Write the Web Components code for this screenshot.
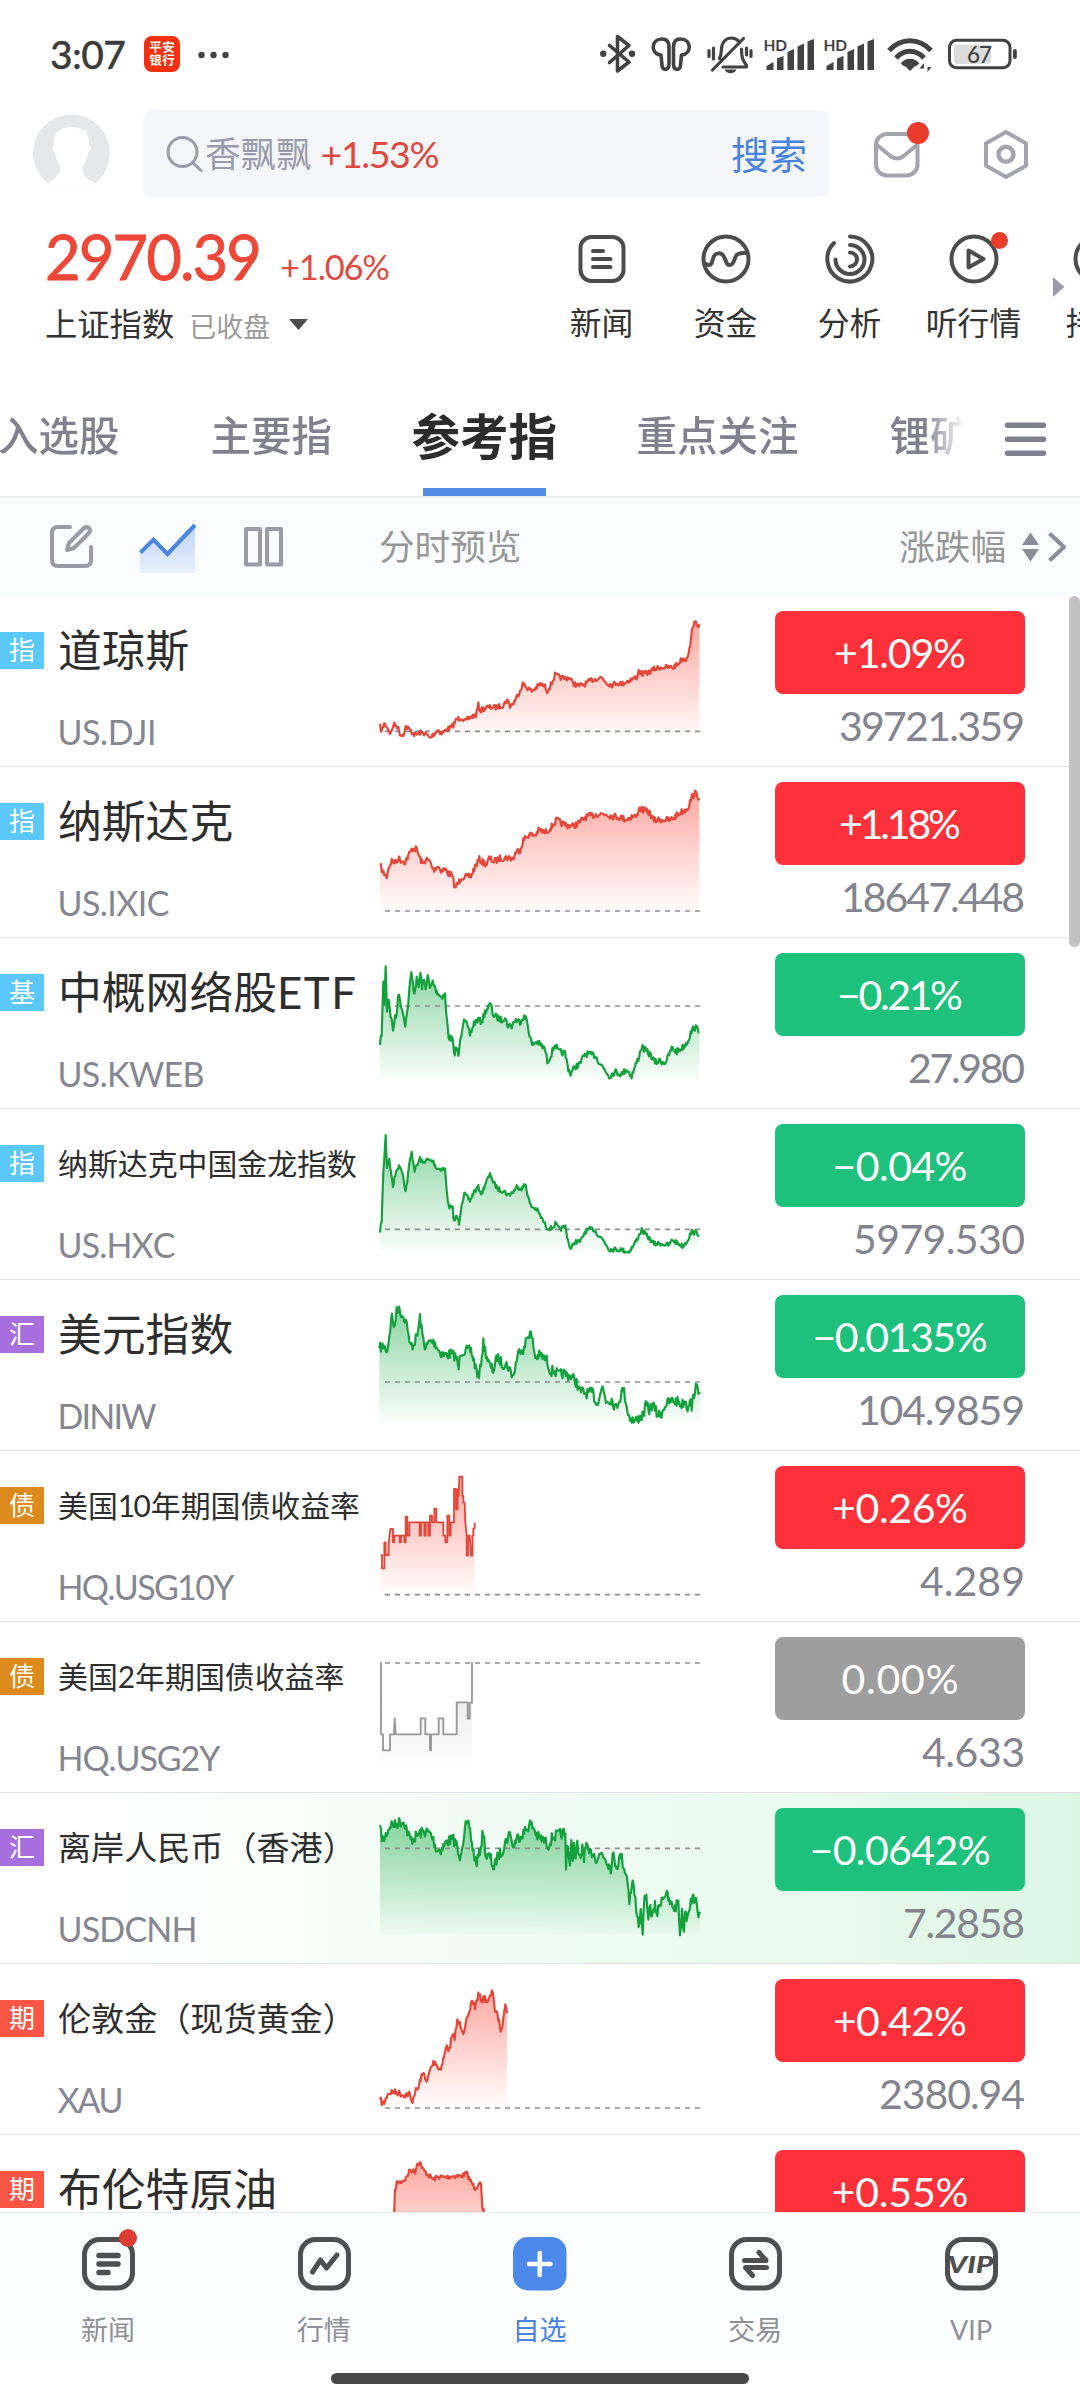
<!DOCTYPE html>
<html lang="zh-CN">
<head>
<meta charset="utf-8">
<title>自选</title>
<style>
html,body{margin:0;padding:0;background:#fff}
body{width:1080px;height:2400px;overflow:hidden;font-family:Lato,"Noto Sans CJK SC",sans-serif;color:#2e2e2e}
</style>
</head>
<body>
<stock-app></stock-app>
<script>
const svg = (x, y, w, h, body, extra = '') =>
  `<svg width="${w}" height="${h}" viewBox="${x} ${y} ${w} ${h}" fill="none" stroke-linecap="round" stroke-linejoin="round" ${extra}>${body}</svg>`;

class Base extends HTMLElement {
  connectedCallback() {
    if (this.shadowRoot) return;
    this.attachShadow({ mode: 'open' }).innerHTML =
      `<style>:host{display:block;box-sizing:border-box}*{box-sizing:border-box}svg{display:block;flex:none}</style>` + this.render();
    this.ready && this.ready();
  }
}

/* Spreads its text over a given advance width by letter spacing. */
customElements.define('fit-text', class extends Base {
  render() { return `<style>:host{display:inline-block;white-space:nowrap;font-kerning:none}span{display:inline-block;white-space:nowrap}</style><span><slot></slot></span>`; }
  ready() {
    const w = +this.getAttribute('w');
    if (!w) return;
    const s = this.shadowRoot.querySelector('span');
    const n = this.textContent.length;
    const ls = (w - s.getBoundingClientRect().width) / (n - 1);
    s.style.letterSpacing = ls + 'px';
    s.style.marginRight = -ls + 'px';
  }
});

customElements.define('status-bar', class extends Base {
  render() {
    const D = '#424242';
    const signal = o => svg(763 + o, 32, 53, 44,
      `<text x="${763.5 + o}" y="50.5" font-size="15.5" font-weight="700" fill="${D}" textLength="23.5" font-family="Lato">HD</text>
       <g fill="${D}"><path d="M${766.5 + o} 70v-4l7-4v8zM${777 + o} 70v-11.500l6.500-2.500v14zM${787.500 + o} 70v-18l6.500-3v21zM${797.500 + o} 70v-23.500l6.500-3v26.500zM${807.500 + o} 70v-28.500l6.500-2.500v31z"/></g>`);
    return `<style>
:host{height:100px;padding:32px 62px 0 50px;display:flex;align-items:flex-start}
.t{font-size:39px;line-height:44px;color:#3c3c3c;font-weight:500;-webkit-text-stroke:.3px #3c3c3c}
.app{width:36px;height:36px;border-radius:8px;background:#f2310f;margin:4px 0 0 18px;color:#fff;font:700 12.500px/13px "Noto Sans CJK SC",sans-serif;text-align:center;padding-top:4px}
.app div{height:13px;letter-spacing:.5px;padding-left:.5px}
.dots{margin:19px auto 0 18px}
</style>
<div class="t"><fit-text w="76">3:07</fit-text></div>
<div class="app"><div>平安</div><div>银行</div></div>
<div class="dots">${svg(199, 50, 31, 8, `<g fill="${D}"><circle cx="202.500" cy="54" r="3.200"/><circle cx="214.500" cy="54" r="3.200"/><circle cx="226.500" cy="54" r="3.200"/></g>`)}</div>
${svg(600, 32, 36, 44, `<g stroke="${D}" stroke-width="3.600"><path d="M609.500 45.500L629 62l-11.500 9V36.500L629 45.500 609.500 62.500"/></g><circle cx="603.300" cy="53.800" r="3.200" fill="${D}"/><circle cx="632" cy="53.800" r="3.200" fill="${D}"/>`, 'style="margin-right:14px"')}
${svg(650, 32, 43, 44, `<g stroke="${D}" stroke-width="3.600"><path d="M661 55c-11-1-10-16 1-16 6 0 7 4 7 8v17c0 7-7 7-7 1zM681.500 55c11-1 10-16-1-16-6 0-7 4-7 8v17c0 7 7 7 7 1z"/></g>`, 'style="margin-right:14px"')}
${svg(707, 32, 46, 44, `<g stroke="${D}" stroke-width="3.200"><path d="M743.500 38.500L712.500 70M719.500 58.500c2-4 1.500-6 2-10 .8-7 5-10.500 10-10.500 3 0 5 1 7 3M741.500 49c0 8 1 11 5 16.500v1.500H723M709 50.500v6M713.500 48v11M751 50.500v6M746.500 48v7"/></g><path d="M724.500 69.500h12c-2 5-10 5-12 0z" fill="${D}"/>`, 'style="margin-right:10px"')}
${signal(0)}<div style="width:7px"></div>${signal(60)}
${svg(886, 32, 48, 44, `<g stroke="${D}" stroke-width="5" stroke-linecap="butt"><path d="M889 50.500c12-13 30-13 42 0M896 58c8-9 20-9 28 0"/><path d="M902.500 65c4-5 11-5 15 0"/></g><path d="M904.500 65.500q5.500-4 11 0l-5.500 5.500zM924 72v-9l-4.500 5.500H924zM927.500 63v9l4-5h-4z" fill="${D}"/>`, 'style="margin-left:10px;margin-right:13px"')}
${svg(947, 32, 71, 44, `<rect x="954" y="44.500" width="37" height="19.500" rx="4" fill="#dcdcdc"/><rect x="949.500" y="40.300" width="60.500" height="27.400" rx="7" stroke="${D}" stroke-width="3"/><rect x="1013" y="49" width="3.800" height="10" rx="1.900" fill="${D}"/><text x="967" y="62.700" font-size="22.500" fill="${D}" font-weight="500" textLength="25" font-family="Lato">67</text>`)}`;
  }
});

customElements.define('search-header', class extends Base {
  render() {
    return `<style>
:host{height:105px;padding:10px 0 0 33px;display:flex;align-items:flex-start}
.av{margin:4px 33px 0 0}
.box{width:686px;height:87px;border-radius:8px;background:#f5f6fa;display:flex;align-items:center;padding:0 22px 0 23px;font-size:36px;line-height:50px;color:#9a9bab}
.q{margin-left:2px;font-size:35.500px}.p{color:#e0473f;font-size:37.500px;margin-left:9px}.go{color:#4983e2;font-size:38px;margin-left:auto}
.m{margin:12px 0 0 42.500px}.h{margin:17px 0 0 51.500px}
</style>
<div class="av">${svg(33, 114, 77, 80, `<defs><clipPath id="c"><circle cx="71.500" cy="153" r="38.500"/></clipPath></defs><g clip-path="url(#c)"><path d="M33 114h77v80H33z" fill="#e6e7e8"/><path d="M45.500 195l3.500-13q10-5 12-14c-3-4-5-8-6-15-3-3-3-6-1-8-1-12 6-18 17-18 5 0 9 1 11 3h5l-1 3c3 3 3 7 3 12 2 2 2 5-1 8-1 7-3 11-6 15 2 8 4 11 12 14l6 18z" fill="#fff"/></g>`)}</div>
<div class="box">${svg(166, 134, 37, 38, `<circle cx="182.500" cy="151" r="14.500" stroke="#9a9bab" stroke-width="3"/><path d="M193 162l8 7.500" stroke="#9a9bab" stroke-width="3"/>`)}
<span class="q">香飘飘</span><span class="p"><fit-text w="119">+1.53%</fit-text></span><span class="go">搜索</span></div>
<div class="m">${svg(872, 122, 60, 60, `<g stroke="#a3a4ac" stroke-width="4"><rect x="876" y="134" width="41.500" height="41.500" rx="11"/><path d="M877 145l14 11.500q6 4 12 0L917 145"/></g><circle cx="918" cy="133" r="11" fill="#ea3c2a"/>`)}</div>
<div class="h">${svg(983, 127, 46, 54, `<g stroke="#a3a4ac" stroke-width="4"><path d="M1006 132l20 11.300v22.400l-20 11.300-20-11.300v-22.400z" stroke-linejoin="miter"/><circle cx="1006" cy="154.300" r="7.500" stroke-width="4.500"/></g>`)}</div>`;
  }
});

customElements.define('quick-link', class extends Base {
  render() {
    const S = `stroke="#4c4c4c" stroke-width="4"`;
    const circle = `<circle cx="27" cy="31" r="22.500" ${S}/>`;
    const icons = {
      news: `<rect x="5.500" y="9" width="43" height="44" rx="11" ${S}/><path d="M18 23h10M18 31h17.500M18 39h17.500" ${S}/>`,
      fund: circle + `<path d="M5 35c7 5 8 0 9-4 1.500-7 9-8 12 0 2 5 2 6 5 6 4 0 4-6 6-9 2-4 7-3 11-3" ${S}/>`,
      ana: `<path d="M27 8.500a22.500 22.500 0 1 1-16 6.500M27 17a14.500 14.500 0 1 1-14.500 14.500M27 24.500a7 7 0 1 1 0 14" ${S}/>`,
      play: circle + `<path d="M21.500 22.500v17L36.500 31z" ${S}/>`,
      hold: circle
    };
    return `<style>:host{width:124px;flex:none;display:flex;flex-direction:column;align-items:center}
.ic{position:relative;margin-left:1px}
.l{font-size:31.800px;line-height:44px;margin-top:15px;color:#333;white-space:nowrap}
i{position:absolute;left:43.500px;top:4px;width:17px;height:17px;border-radius:50%;background:#ea3c2a}</style>
<div class="ic">${svg(0, 0, 54, 58, icons[this.getAttribute('icon')])}${this.hasAttribute('dot') ? '<i></i>' : ''}</div><div class="l"><slot></slot></div>`;
  }
});

customElements.define('index-header', class extends Base {
  render() {
    return `<style>
:host{height:175px;display:flex;padding-left:45px;padding-top:20px;overflow:hidden;position:relative}
.idx{width:494px;flex:none}
.a{display:flex;align-items:baseline;height:62px;line-height:62px;color:#ee4637}
.big{font-size:61.500px;margin-right:18px;-webkit-text-stroke:.8px #ee4637}.s{font-size:34.500px;color:#e24a3f}
.b{display:flex;align-items:center;height:44px;margin-top:15px;font-size:32.300px;line-height:44px;color:#333}
.c{font-size:27px;color:#9a9a9a;margin:5px 18px 0 15px}
.more{position:absolute;left:1052px;top:70px}
.ql{display:flex;margin-top:3px;margin-left:.5px}
</style>
<div class="idx"><div class="a"><span class="big"><fit-text w="217">2970.39</fit-text></span><span class="s"><fit-text w="110">+1.06%</fit-text></span></div>
<div class="b"><span>上证指数</span><span class="c">已收盘</span>${svg(288, 318, 21, 13, '<path d="M289 319h19l-9.500 11z" fill="#4c4c4c"/>')}</div></div>
<div class="ql"><quick-link icon="news">新闻</quick-link><quick-link icon="fund">资金</quick-link><quick-link icon="ana">分析</quick-link><quick-link icon="play" dot>听行情</quick-link><quick-link icon="hold">持仓</quick-link></div>
<div class="more">${svg(1052, 275, 14, 24, '<path d="M1053 277v20l11.500-10z" fill="#9c9ca8"/>')}</div>`;
  }
});

customElements.define('group-tabs', class extends Base {
  render() {
    return `<style>
:host{height:117px;display:flex;align-items:stretch;border-bottom:1px solid #e4e6ea;position:relative;overflow:hidden;white-space:nowrap;color:#80818d;font-size:40.500px;font-weight:500;line-height:60px}
.w{width:965px;display:flex;overflow:hidden;padding-top:26px;flex:none;-webkit-mask-image:linear-gradient(90deg,#000 925px,transparent 965px);mask-image:linear-gradient(90deg,#000 925px,transparent 965px)}
span{flex:none}
.on{color:#2c2c2c;font-size:48.500px;font-weight:700;display:flex;flex-direction:column;align-items:center;justify-content:space-between;height:90px}
.on:after{content:"";width:123px;height:8px;background:#548ce4}
.menu{margin:41px 0 0 39px}
</style>
<div class="w"><span style="width:212.500px;margin-left:-2px">入选股</span><span style="width:201px">主要指</span><span class="on">参考指</span><span style="margin-left:79.500px;width:253px">重点关注</span><span>锂矿</span></div>
<div class="menu">${svg(1004, 421, 43, 37, '<g stroke="#80818d" stroke-width="5.500"><path d="M1007.500 425.300h36M1007.500 439.300h36M1007.500 453.300h36"/></g>')}</div>`;
  }
});

customElements.define('list-toolbar', class extends Base {
  render() {
    const G = 'stroke="#9a9ba6" stroke-width="4"';
    return `<style>
:host{height:99px;display:flex;align-items:center;background:#fafcff;padding:0 13px 0 48px;font-size:35.600px;line-height:50px;color:#979797}
.t{margin-left:94px}.r{margin-left:auto;display:flex;align-items:center;color:#979797}
</style>
${svg(48, 520, 47, 54, `<path d="M70 527H58q-6 0-6 6v27q0 6 6 6h27q6 0 6-6V547" ${G}/><path d="M67 550l2-7 15-15q3-2 5 0t0 5L74 548z" ${G}/>`)}
${svg(139, 520, 58, 54, `<defs><linearGradient id="g" x1="0" y1="0" x2="0" y2="1"><stop offset="0" stop-color="#bcd2f6"/><stop offset="1" stop-color="#e9f1fd"/></linearGradient></defs><path d="M140 552l13-12 14 14 28-29v48h-55z" fill="url(#g)"/><path d="M140.500 552.500l13-13 14 14.500 27.500-29" stroke="#4a86e2" stroke-width="4" stroke-linecap="butt" stroke-linejoin="miter"/>`, 'style="margin-left:44px"')}
${svg(242, 520, 43, 54, `<rect x="246" y="529" width="14" height="35.500" ${G}/><rect x="267" y="529" width="14" height="35.500" ${G}/>`, 'style="margin-left:45px"')}
<span class="t">分时预览</span>
<span class="r">涨跌幅${svg(1021, 528, 19, 36, '<path d="M1022 544l8.500-12.500L1039 544zM1022 548l8.500 12.500L1039 548z" fill="#8b8c98"/>', 'style="margin-left:15px"')}${svg(1046, 528, 21, 36, '<path d="M1049.500 532.500l14.500 13.500-14.500 13.500" stroke="#8b8c98" stroke-width="4" stroke-linecap="butt"/>', 'style="margin-left:6px"')}</span>`;
  }
});

/* Intraday line. Anchors are in thirds of a pixel; jitter adds tick noise between them. */
const SERIES = {
  dji: { c: 'up', top: 18, base: 424, j: 12, p: '28,405 35,425 42,400 50,408 62,432 70,405 80,405 92,435 100,432 108,410 120,420 135,435 150,428 165,430 180,445 195,428 205,420 215,430 230,418 240,415 250,405 260,388 275,382 285,395 300,382 318,375 325,345 330,362 350,352 380,352 400,345 412,330 420,348 430,340 445,312 458,282 470,292 485,303 500,292 512,282 525,290 532,303 545,280 555,255 570,262 585,265 598,262 608,278 625,288 645,282 665,270 695,262 710,278 725,285 740,278 755,282 775,272 800,262 806,242 815,252 835,248 850,238 870,232 910,232 925,220 937,206 948,208 958,180 963,150 968,105 978,99 988,106' },
  ixic: { c: 'up', top: 531, base: 963, j: 15, p: '30,825 38,845 50,860 55,835 65,812 75,818 85,805 95,812 105,815 115,798 127,775 140,778 148,800 158,822 168,808 180,815 190,840 203,828 215,842 225,838 235,850 245,855 255,892 265,880 275,860 290,862 303,858 315,830 328,808 340,818 350,822 358,805 372,815 390,805 415,803 430,806 438,785 450,780 460,750 475,735 495,735 508,720 525,728 545,710 560,690 575,700 590,705 608,708 625,700 645,682 665,677 685,672 710,672 725,678 745,680 768,688 785,680 800,680 806,655 820,660 838,668 852,692 870,688 900,690 915,680 930,668 945,660 955,650 965,622 975,610 988,622' },
  kweb: { c: 'down', top: -6, base: 198, j: 15, p: '30,315 35,280 40,130 43,190 47,82 51,210 56,175 62,225 69,268 75,235 80,225 84,162 90,180 96,205 106,252 112,215 118,150 124,100 133,160 140,118 146,140 151,100 156,140 162,122 167,145 173,105 180,148 188,125 198,150 212,170 225,165 229,225 236,290 248,300 252,345 259,320 265,348 273,285 282,230 290,255 300,285 312,250 322,240 335,245 348,210 362,192 370,225 385,235 395,240 405,230 412,255 425,258 435,240 450,245 460,230 470,238 478,280 486,315 500,305 515,318 525,328 532,365 542,348 555,312 565,335 585,340 595,385 602,402 615,380 630,372 645,340 660,345 675,345 690,370 705,390 718,408 735,395 755,402 770,388 785,408 795,380 805,355 815,320 830,335 842,345 855,368 870,362 885,368 895,350 905,325 920,335 940,320 952,305 962,280 972,262 988,270' },
  hxc: { c: 'down', top: 507, base: 868, j: 11, p: '30,878 35,840 40,700 47,588 51,680 58,655 63,700 69,738 76,705 82,682 92,680 98,700 107,755 114,705 120,660 125,638 134,690 142,675 150,655 158,670 165,662 173,660 190,665 200,685 225,688 229,740 236,800 248,805 252,845 260,828 267,848 275,790 283,762 300,782 312,755 325,742 335,762 348,725 362,702 370,728 385,748 400,752 415,765 430,755 440,740 455,745 467,733 474,770 482,798 500,808 515,835 530,862 545,865 556,852 568,868 586,860 594,900 602,928 615,905 632,905 645,875 660,868 672,868 685,885 700,900 718,928 750,928 775,936 790,918 802,895 815,870 828,885 842,900 852,912 872,910 895,916 908,900 920,908 938,918 950,905 965,875 988,882' },
  dx: { c: 'down', top: 0, base: 306, j: 24, p: '28,205 40,198 52,212 58,165 66,105 74,150 80,82 90,95 105,115 113,140 118,195 130,195 142,165 150,112 157,165 167,205 178,185 195,188 205,210 220,225 245,222 258,230 266,265 272,215 285,212 303,212 312,245 327,295 333,245 340,190 348,220 358,255 370,272 382,230 395,250 412,255 430,290 440,238 450,205 462,210 470,175 480,155 488,185 496,232 510,225 530,240 542,275 552,270 565,285 580,280 592,285 605,290 620,308 628,332 650,340 668,338 680,372 690,340 698,322 708,362 725,358 737,385 745,365 760,325 767,360 775,405 793,425 810,412 820,405 828,375 838,390 848,372 860,400 872,405 885,375 905,362 925,365 935,375 945,360 953,385 960,350 965,385 975,325 990,328' },
  us10: { c: 'up', top: 513, base: 944, j: 0, p: '32,825 36,825 36,865 43,865 43,787 47,787 47,825 56,825 56,790 61,747 69,747 69,787 73,787 73,767 89,767 89,787 93,787 93,767 103,767 103,787 107,787 107,710 112,710 112,767 118,767 118,727 149,727 149,767 153,767 153,727 163,727 163,767 167,767 167,727 175,727 175,767 180,767 180,707 186,707 186,727 193,727 193,687 199,687 199,727 220,727 220,767 226,767 226,787 232,787 232,707 238,707 238,767 242,767 242,727 252,727 252,627 258,627 258,688 263,688 263,628 266,648 268,590 277,590 277,648 280,648 280,668 284,668 286,727 290,767 290,827 294,827 294,767 299,767 303,827 307,827 307,767 310,767 310,745 314,745 314,728' },
  us2: { c: 'flat', top: 1026, base: 1149, j: 0, p: '33,1147 33,1363 39,1363 39,1411 60,1411 60,1363 72,1363 74,1315 77,1363 152,1363 152,1315 166,1315 166,1363 180,1363 180,1411 183,1411 183,1363 206,1363 206,1315 220,1315 220,1363 260,1363 260,1267 293,1267 293,1316 299,1316 299,1268 306,1268 306,1147' },
  cnh: { c: 'down', top: 39, base: 205, j: 26, p: '30,135 33,165 40,180 50,160 62,132 75,135 90,125 103,125 112,155 122,180 135,172 150,160 165,155 180,160 190,180 200,210 215,208 230,185 250,178 262,200 267,240 275,200 287,140 298,138 308,205 318,252 327,225 340,155 348,230 360,230 372,268 382,230 395,215 405,190 422,155 428,205 440,175 460,160 480,132 492,145 502,170 520,180 535,195 548,170 565,165 582,158 586,170 588,270 590,205 594,195 600,260 604,195 608,232 612,200 617,235 622,192 627,235 632,242 637,192 642,230 649,195 655,225 668,215 680,238 695,218 710,240 722,265 728,225 740,258 753,225 763,265 773,300 778,360 788,305 796,360 806,435 812,400 818,450 824,360 829,360 835,405 841,385 848,410 855,380 862,400 875,352 888,340 900,370 915,385 925,365 930,460 936,400 942,455 945,385 950,410 960,370 975,350 983,405 990,380' },
  xau: { c: 'up', top: 552, base: 984, j: 15, p: '30,958 38,972 45,965 52,942 65,935 85,938 100,945 118,942 125,968 135,935 145,925 152,895 163,878 170,912 180,870 190,848 198,845 205,868 215,858 222,830 230,798 238,810 246,770 254,770 262,725 272,735 280,755 290,722 298,705 305,658 315,680 325,645 335,660 345,655 355,665 363,645 369,635 375,690 385,715 394,758 402,690 406,668 411,705' },
  oil: { c: 'up', top: 1065, base: 1700, j: 11, p: '72,1310 75,1235 80,1208 95,1205 108,1195 120,1170 135,1175 142,1150 150,1148 160,1170 175,1185 190,1198 205,1190 225,1192 250,1188 275,1188 290,1180 300,1200 315,1225 325,1212 333,1215 337,1290 341,1290 341,1310' }
};
customElements.define('trend-line', class extends Base {
  render() {
    const s = SERIES[this.getAttribute('series')];
    const a = s.p.split(' ').map(q => q.split(',').map(Number));
    let seed = 7;
    const rnd = () => (seed = (seed * 16807) % 2147483647) / 2147483647 - .5;
    let pts = [a[0]];
    for (let i = 1; i < a.length; i++) {
      const [x0, y0] = a[i - 1], [x1, y1] = a[i];
      const n = s.j ? Math.max(1, Math.round((x1 - x0) / 2.5)) : 1;
      for (let k = 1; k <= n; k++) pts.push([x0 + (x1 - x0) * k / n, y0 + (y1 - y0) * k / n + (s.j ? rnd() * s.j * 1.3 : 0)]);
    }
    const line = pts.map(p => p[0].toFixed(1) + ',' + p[1].toFixed(1)).join(' ');
    const bot = s.top + 426, col = { up: '#e4463a', down: '#12a13c', flat: '#979797' }[s.c];
    const fill = { up: '#ff5a4e', down: '#1fae4b', flat: '#999' }[s.c];
    const fb = this.getAttribute('series') === 'dji' ? s.base : bot;
    return `<style>:host{width:350px;height:170px;flex:none}</style>
<svg width="350" height="170" viewBox="0 ${s.top} 1050 510" fill="none"><defs><linearGradient id="f" gradientUnits="userSpaceOnUse" x1="0" x2="0" y1="${s.top + 70}" y2="${bot}"><stop offset="0" stop-color="${fill}" stop-opacity="${s.c === 'flat' ? .3 : .54}"/><stop offset="1" stop-color="${fill}" stop-opacity=".02"/></linearGradient><clipPath id="k"><rect x="0" y="${s.top}" width="1050" height="${fb - s.top}"/></clipPath></defs>
<path d="M${pts[0][0]},${bot + 30} L${line} L${pts[pts.length - 1][0]},${bot + 30}z" fill="url(#f)" clip-path="url(#k)"/>
<path d="M45 ${s.base}H990" stroke="#8f8f8f" stroke-width="5" stroke-dasharray="15 15"/>
<polyline points="${line}" stroke="${col}" stroke-width="${s.j ? 6.5 : 5.5}" stroke-linejoin="round"/></svg>`;
  }
});

customElements.define('quote-row', class extends Base {
  render() {
    const g = n => this.getAttribute(n);
    const badge = { '指': '#5bc8f9', '基': '#5bc8f9', '汇': '#a76fdd', '债': '#dc8a1c', '期': '#fb5546' }[g('kind')];
    const pill = { up: '#fe303a', down: '#1dc17c', flat: '#9e9e9e' }[g('dir')];
    return `<style>
:host{height:171px;display:flex;align-items:flex-start;border-bottom:1px solid #dfe2e6;flex:none}
:host([live]){background:linear-gradient(90deg,#fff 8%,#f1fcf4 45%,#e9faee 75%,#dcf6e4)}
.k{width:44px;height:37px;background:${badge};margin-top:36px;color:#fff;font-size:26px;line-height:36px;text-align:center;flex:none}
.n{width:326px;padding:24px 0 0 14px;flex:none;white-space:nowrap}
.name{font-size:${g('size') || 43.8}px;line-height:60px;height:60px;color:#2e2e2e}
.code{font-size:34px;line-height:40px;color:#85868f;margin-top:32px;margin-left:-.5px}
.v{width:250px;margin-left:55px;padding-top:15px}
.pill{height:83px;border-radius:8px;background:${pill};color:#fff;font-size:41px;line-height:83px;text-align:center}
.price{font-size:41px;line-height:50px;margin-top:7px;color:#83848e;text-align:right}
</style>
<div class="k">${g('kind')}</div>
<div class="n"><div class="name"><slot></slot></div>${g('code') ? `<div class="code"><fit-text w="${g('cw')}">${g('code')}</fit-text></div>` : ''}</div>
<trend-line series="${g('series')}"></trend-line>
<div class="v"><div class="pill"><fit-text w="${g('pw')}">${g('chg')}</fit-text></div>${g('price') ? `<div class="price"><fit-text w="${g('vw')}">${g('price')}</fit-text></div>` : ''}</div>`;
  }
});

customElements.define('quote-list', class extends Base {
  render() {
    return `<style>:host{height:1616px;overflow:hidden;display:flex;flex-direction:column;position:relative}
.bar{position:absolute;right:0;top:0;width:11px;height:351px;border-radius:6px;background:#c2c2c2}</style>
<quote-row kind="指" dir="up" series="dji" code="US.DJI" cw="99" chg="+1.09%" pw="132" price="39721.359" vw="186">道琼斯</quote-row>
<quote-row kind="指" dir="up" series="ixic" code="US.IXIC" cw="112" chg="+1.18%" pw="122" price="18647.448" vw="184">纳斯达克</quote-row>
<quote-row kind="基" dir="down" series="kweb" code="US.KWEB" cw="147" chg="−0.21%" pw="126" price="27.980" vw="117">中概网络股<fit-text w="79">ETF</fit-text></quote-row>
<quote-row kind="指" dir="down" series="hxc" code="US.HXC" cw="118" chg="−0.04%" pw="135" price="5979.530" vw="172" size="29.9">纳斯达克中国金龙指数</quote-row>
<quote-row kind="汇" dir="down" series="dx" code="DINIW" cw="99" chg="−0.0135%" pw="175" price="104.9859" vw="168">美元指数</quote-row>
<quote-row kind="债" dir="up" series="us10" code="HQ.USG10Y" cw="177" chg="+0.26%" pw="136" price="4.289" vw="105" size="29.9">美国<fit-text w="33">10</fit-text>年期国债收益率</quote-row>
<quote-row kind="债" dir="flat" series="us2" code="HQ.USG2Y" cw="163" chg="0.00%" pw="117" price="4.633" vw="103" size="29.9">美国2年期国债收益率</quote-row>
<quote-row live kind="汇" dir="down" series="cnh" code="USDCNH" cw="140" chg="−0.0642%" pw="181" price="7.2858" vw="122" size="33.1">离岸人民币（香港）</quote-row>
<quote-row kind="期" dir="up" series="xau" code="XAU" cw="66" chg="+0.42%" pw="134" price="2380.94" vw="146" size="33.1">伦敦金（现货黄金）</quote-row>
<quote-row kind="期" dir="up" series="oil" chg="+0.55%" pw="137">布伦特原油</quote-row>
<div class="bar"></div>`;
  }
});

customElements.define('nav-item', class extends Base {
  render() {
    const on = this.hasAttribute('active'), D = '#4f4f50';
    const box = `<rect x="5.500" y="8.500" width="48" height="48.500" rx="15" stroke="${D}" stroke-width="5"/>`;
    const icons = {
      news: box + `<g stroke="${D}" stroke-width="5.500"><path d="M20 24.500h19M20 33h19M20 41.500h9"/></g>`,
      mkt: box + `<path d="M18 41l8-12 6 8 10.500-13" stroke="${D}" stroke-width="5" transform="translate(-.5 0)"/>`,
      fav: `<rect x="3" y="6" width="53.500" height="53.500" rx="15" fill="#4d89ea"/><path d="M29.700 22v22M19 33h21.500" stroke="#fff" stroke-width="4.500"/>`,
      trade: box + `<path d="M18.500 29.500H40l-7-8M40.500 36.500h-21l7 8" stroke="${D}" stroke-width="5"/>`,
      vip: box + `<text x="5.500" y="41.500" font-family="Lato" font-weight="900" font-style="italic" font-size="22" textLength="46" lengthAdjust="spacingAndGlyphs" fill="${D}">VIP</text>`
    };
    return `<style>:host{flex:1;display:flex;flex-direction:column;align-items:center}
.ic{position:relative;margin-left:2px}
.l{font-size:27px;line-height:36px;margin-top:15px;color:${on ? '#4983e2' : '#8f9096'};white-space:nowrap}
i{position:absolute;left:40px;top:-2px;width:18px;height:18px;border-radius:50%;background:#dd3c30}</style>
<div class="ic">${svg(0, 0, 60, 66, icons[this.getAttribute('icon')])}${this.hasAttribute('dot') ? '<i></i>' : ''}</div><div class="l"><slot></slot></div>`;
  }
});

customElements.define('tab-bar', class extends Base {
  render() {
    return `<style>:host{height:146px;display:flex;background:#fbfdff;border-top:1px solid #e6ebf0;padding:18px 1px 0 0}</style>
<nav-item icon="news" dot>新闻</nav-item><nav-item icon="mkt">行情</nav-item><nav-item icon="fav" active>自选</nav-item><nav-item icon="trade">交易</nav-item><nav-item icon="vip">VIP</nav-item>`;
  }
});

customElements.define('stock-app', class extends Base {
  render() {
    return `<style>:host{width:1080px;height:2400px;overflow:hidden;display:flex;flex-direction:column;background:#fff}
:host>*{flex:none}
.home{width:418px;height:11px;border-radius:6px;background:#474747;margin:15px 0 0 331px}</style>
<status-bar></status-bar><search-header></search-header><index-header></index-header><group-tabs></group-tabs><list-toolbar></list-toolbar><quote-list></quote-list><tab-bar></tab-bar><div class="home"></div>`;
  }
});
</script>
</body>
</html>
